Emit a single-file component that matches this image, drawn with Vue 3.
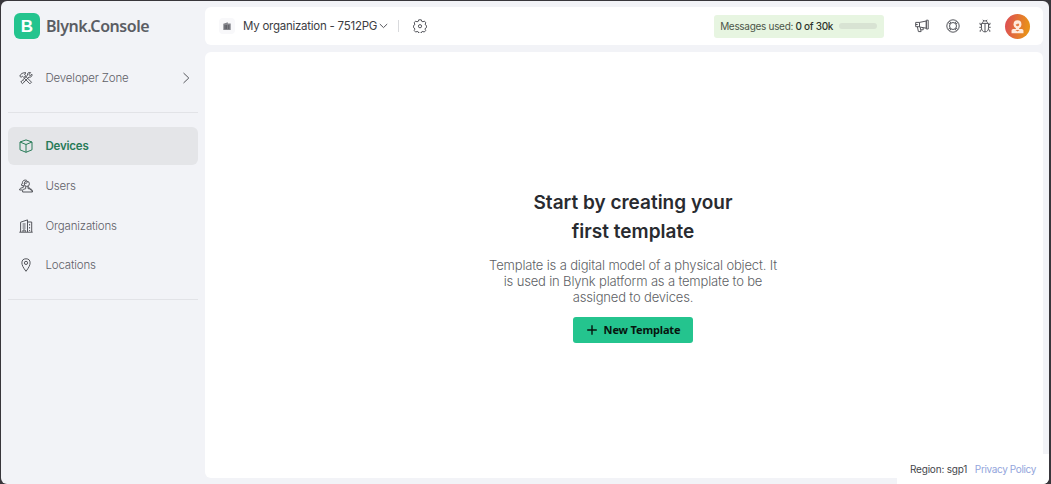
<script setup>
const items = [
  { label: 'Devices', icon: 'box', active: true },
  { label: 'Users', icon: 'users' },
  { label: 'Organizations', icon: 'org' },
  { label: 'Locations', icon: 'pin' },
]
</script>

<template>
  <div class="frame">
    <div class="window">
      <aside class="sidebar">
        <div class="brand">
          <span class="logo">B</span>
          <span class="brand-name">Blynk.Console</span>
        </div>
        <div class="nav-item dev">
          <svg class="icon" viewBox="0 0 14 14">
            <path d="M.8 5.2C1.5 2.8 4 1.3 7 1.8L5.5 3.2 6.8 4.6 4.8 6.5 3.4 5.1 2.1 6.3ZM6.5 5.2l6 6-1.6 1.6-6-6M13 3.3l-1.9 1.3-1.2-1.1 1.7-1.9C9.6 1 8 2.2 8.6 4.1L1.8 11l1.7 1.7 6.4-6.6c2 .6 3.5-1 3.1-2.8ZM4.5 9.7l1.3 1.1" />
          </svg>
          <span class="label">Developer Zone</span>
          <svg class="chevron" viewBox="0 0 8 12"><path d="M1.5 1 6.8 6 1.5 11" /></svg>
        </div>
        <nav class="nav">
          <div v-for="i in items" :key="i.label" class="nav-item" :class="{ active: i.active }">
            <svg class="icon" viewBox="0 0 14 14">
              <path v-if="i.icon === 'box'" d="M7 .9 13 3v7.8l-6 2.5-6-2.5V3ZM1 3l6 2.5L13 3M7 5.5v7.8" />
              <g v-else-if="i.icon === 'users'">
                <circle cx="7.8" cy="4.8" r="2.6" />
                <path d="M3.6 13v-1.1c0-1 .6-1.6 1.6-1.8l1.5-.4V7.3M9 7.3v2.3l2.7.5c1.1.2 1.8.9 1.8 1.8V13ZM3.6 13h9.9M7.8 1.4C5.6.4 3.4 1.6 3.4 3.7c0 1.1-.5 1.8-1.3 2.3l3.4 1M4.3 7v1.4l-2.6.8C.9 9.5.6 10 .6 11h3M5.4 4.4c1.5.2 2.6-.3 3.1-1.3" />
              </g>
              <path v-else-if="i.icon === 'org'" d="M.3 13.2h13.4M1.6 13V3.2L8.5.9V13M8.5 3h4.2v10M3.6 5h3M3.6 7h3M3.6 9h3M4 13v-2h2.2v2M10.6 5v1.5M10.6 8v1.5M10.6 11v1" />
              <g v-else>
                <path d="M7 13.3C4.2 9.7 2.9 7 2.9 4.9a4.1 4.1 0 0 1 8.2 0C11.1 7 9.8 9.7 7 13.3Z" />
                <circle cx="7" cy="4.9" r="1.6" />
              </g>
            </svg>
            <span class="label">{{ i.label }}</span>
          </div>
        </nav>
      </aside>

      <main class="main">
        <header class="topbar">
          <span class="org-badge">
            <svg viewBox="0 0 8 8"><path d="M.3 8V1.8L4.8.2V1.6h2.9V8Z" fill="#85868c" /><path d="M2.1 3v4M3.7 3v4M5.8 3v4" stroke="#45464d" stroke-width=".7" /></svg>
          </span>
          <span class="org-name">My organization - 7512PG</span>
          <svg class="caret" viewBox="0 0 9 6"><path d="M.8 1 4.5 4.6 8.2 1" /></svg>
          <span class="sep"></span>
          <svg class="gear" viewBox="0 0 14 14">
            <path d="M5.7.8h2.6l.4 1.5 1.3.5 1.4-.7 1.4 1.7-.6 1.3.4 1.1 1 .5v1.8l-1.1.5-.4 1.2.6 1.3-1.5 1.6-1.3-.7-1.3.5-.4 1.3H5.7l-.4-1.3-1.2-.5-1.4.7-1.5-1.6.6-1.3-.4-1.2-1-.5V6.7l1-.5.4-1.1-.6-1.3 1.4-1.7 1.4.7 1.3-.5Z" />
            <circle cx="7" cy="7.2" r="1.6" />
          </svg>
          <span class="spacer"></span>
          <div class="usage">
            <span class="usage-text">Messages used: <b>0 of 30k</b></span>
            <span class="meter"></span>
          </div>
          <svg class="tool horn" viewBox="0 0 14 14">
            <path d="M4.5 3.4 11.3 2v7.2L4.5 8ZM11.3 1.2h1.9v8.8h-1.9ZM4.5 3.4H.7v4.3h3.8M2.4 7.8l1 4.8h2.7L5.2 8.3M5.8 10.8h2.4V8.9M.7 5.5h2" />
          </svg>
          <svg class="tool ring" viewBox="0 0 14 14">
            <circle cx="7" cy="7" r="6.2" /><circle cx="7" cy="7" r="3.5" />
            <path d="m2.1 3.5 2 1.6M3.5 2.1l1.6 2M10.5 2.1l-1.6 2M11.9 3.5l-2 1.6M2.1 10.5l2-1.6M3.5 11.9l1.6-2M10.5 11.9l-1.6-2M11.9 10.5l-2-1.6" />
          </svg>
          <svg class="tool bug" viewBox="0 0 14 14">
            <path d="M4.5 4.4C4.5 2.8 5.4 1.8 7 1.8s2.5 1 2.5 2.6M3.5 4.4h7v4.4c0 2.5-1.4 4.1-3.5 4.1S3.5 11.3 3.5 8.8ZM7 4.4v8.5M3.5 6.2 2 5.4V3.8M10.5 6.2l1.5-.8V3.8M3.5 8.3H1.3M10.5 8.3h2.2M3.8 10.5l-1.6.8v1.5M10.2 10.5l1.6.8v1.5M4.9.8l.9 1.2M9.1.8l-.9 1.2" />
          </svg>
          <span class="avatar">
            <svg viewBox="0 0 26 26">
              <circle cx="13" cy="10.7" r="4.1" fill="#ffe9dc" />
              <path d="M11.3 13.5h3.4v2h2.6c1.1 0 1.9.8 1.9 1.8v2.6H6.8v-2.6c0-1 .8-1.8 1.9-1.8h2.6Z" fill="#ffe9dc" />
              <path d="M11.2 10.7h1.3l1.1-1.2 1.2 1.4c0 1-.8 1.8-1.8 1.8s-1.8-.8-1.8-2ZM10.8 16.6l2.2 1.5 2.2-1.5Z" fill="#e57a40" />
            </svg>
          </span>
        </header>

        <section class="content">
          <h1>Start by creating your<br />first template</h1>
          <p>
            Template is a digital model of a physical object. It<br />
            is used in Blynk platform as a template to be<br />
            assigned to devices.
          </p>
          <button class="create">
            <svg viewBox="0 0 10 10"><path d="M5 .2v9.6M.2 5h9.6" /></svg>
            <span>New Template</span>
          </button>
        </section>
      </main>
      <footer class="footer"><span class="region">Region: sgp1</span><a>Privacy Policy</a></footer>
    </div>
  </div>
</template>

<style>
body { background: #38363b; overflow: hidden; }
</style>

<style scoped>
* { box-sizing: border-box; }
.frame { width: 1051px; height: 484px; padding: 1px 2px 0 1px; background: #38363b; font-family: Inter, "Liberation Sans", sans-serif; }
.window { position: relative; display: flex; height: 483px; background: #f2f3f7; border-radius: 6px; overflow: hidden; }
svg { fill: none; stroke: #55565c; stroke-width: 1; flex: none; display: block; }
.sidebar { width: 204px; padding: 12px 7px 0; }
.brand { display: flex; align-items: center; height: 26px; padding-left: 6px; }
.logo { width: 26px; height: 26px; border-radius: 6px; background: #24c48e; color: #fff; font: 700 17px/27px "Liberation Sans", sans-serif; text-align: center; }
.brand-name { margin-left: 6px; color: #5b5d64; font: 600 16px/26px "Noto Sans", sans-serif; letter-spacing: -0.45px; white-space: nowrap; }
.nav-item { display: flex; align-items: center; height: 38px; padding-left: 11px; border-radius: 6px; color: #5f6067; font-size: 11.5px; font-weight: 300; letter-spacing: -0.17px; white-space: nowrap; }
.label { padding-top: 1px; line-height: 15px; }
.icon { width: 14px; height: 14px; margin-right: 12.5px; }
.dev { margin-top: 20px; }
.chevron { width: 8px; height: 12px; margin-left: auto; margin-right: 8px; }
.nav { display: flex; flex-direction: column; gap: 1.8px; margin-top: 15px; padding: 14px 0 14.6px; border-top: 1px solid #e2e3e7; border-bottom: 1px solid #e2e3e7; }
.active { background: #e4e5e8; color: #287b58; font-weight: 600; letter-spacing: -0.2px; }
.active svg { stroke: #287b58; }
.main { width: 838px; display: flex; flex-direction: column; gap: 7px; padding: 6px 0; }
.topbar { display: flex; align-items: center; flex: none; height: 38px; padding-right: 13px; background: #fff; border-radius: 6px; }
.org-badge { display: flex; align-items: center; justify-content: center; width: 16px; height: 16px; margin-left: 14px; background: #f8f8fa; border-radius: 4px; }
.org-badge svg { width: 8px; height: 8px; stroke: none; }
.org-name { width: 134px; margin-left: 8px; padding-top: 1px; font-size: 11.5px; line-height: 15px; letter-spacing: -0.25px; color: #3c3d43; white-space: nowrap; }
.caret { width: 9px; height: 6px; margin-left: 2px; }
.sep { width: 1px; height: 12px; margin-left: 10px; background: #d9dadd; }
.gear { width: 14px; height: 14px; margin-left: 13.5px; }
.spacer { flex: 1; }
.usage { display: flex; align-items: center; justify-content: space-between; width: 170px; height: 23px; padding: 0 7px 0 6px; margin-right: 30.5px; background: #e7f5e1; border-radius: 3px; font-size: 10px; letter-spacing: -0.3px; color: #4c5549; white-space: nowrap; }
.usage b { font-weight: 500; color: #2e352d; }
.meter { width: 38px; height: 6px; border-radius: 3px; background: #d8e3d3; }
.tool { width: 14px; height: 14px; margin-right: 17.7px; }
.tool.bug { margin-right: 13px; }
.avatar { width: 25px; height: 25px; border-radius: 50%; background: linear-gradient(100deg, #dc4a58, #e8901a 85%); overflow: hidden; }
.avatar svg { width: 25px; height: 25px; stroke: none; }
.content { display: flex; flex-direction: column; align-items: center; flex: 1; padding: 137px 0 0 18px; background: #fff; border-radius: 6px; text-align: center; white-space: nowrap; }
h1 { margin: 0; font-size: 19px; line-height: 28.5px; font-weight: 600; color: #292b30; }
p { margin: 11px 0 0; font-size: 13px; line-height: 16px; font-weight: 300; letter-spacing: -0.16px; color: #5e5f65; }
.create { display: flex; align-items: center; justify-content: center; gap: 7px; width: 120px; height: 26px; margin-top: 12px; padding: 0 0 0 1px; border: 0; border-radius: 3px; background: #24c48e; color: #07150f; font: 700 11px/26px "Noto Sans", sans-serif; letter-spacing: -0.15px; }
.create svg { width: 10px; height: 10px; stroke: #07150f; stroke-width: 1.4; }
.footer { position: absolute; right: 0; bottom: 0; display: flex; align-items: center; justify-content: space-between; width: 152px; height: 30px; padding: 0 13px 0 13px; background: #fff; border-top-left-radius: 5px; font-size: 10px; letter-spacing: -0.2px; color: #45464b; white-space: nowrap; }
.footer a { color: #93a5dc; letter-spacing: -0.36px; }
</style>
